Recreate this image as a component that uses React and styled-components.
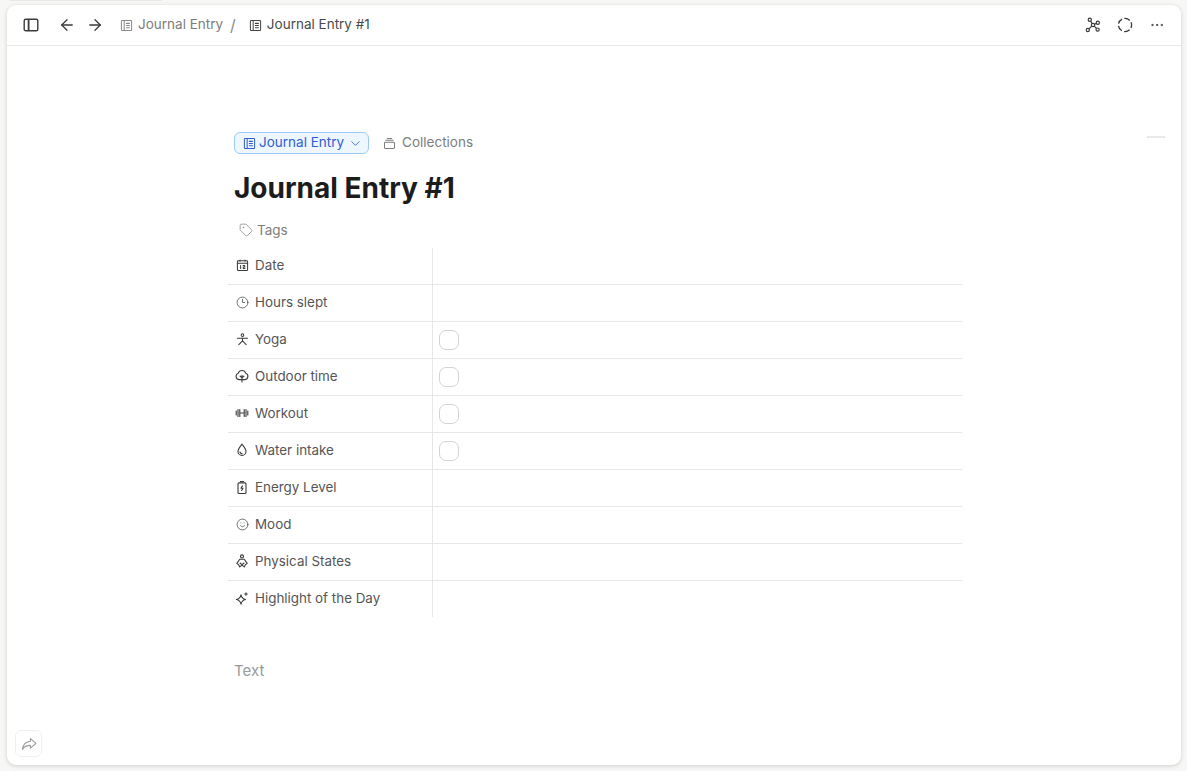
import React from 'react';
import styled, { createGlobalStyle } from 'styled-components';
import { ArrowLeft, ArrowRight, Ellipsis, Tag, Clock3, Smile, ChevronDown } from 'lucide-react';

const GlobalStyle = createGlobalStyle`
  html, body {
    margin: 0;
    padding: 0;
    height: 100%;
    background: #f7f7f5;
    font-family: Inter, "Noto Sans", sans-serif;
    overflow: hidden;
  }
`;

// small hand drawn icons
const Svg = ({ size = 14, children, width = 1.1 }) => (
  <svg width={size} height={size} viewBox="0 0 14 14" fill="none" stroke="currentColor" strokeWidth={width} strokeLinecap="round" strokeLinejoin="round">
    {children}
  </svg>
);

const DocIcon = () => (
  <Svg size={13}>
    <rect x="1.5" y="1.5" width="11" height="11" rx="1" />
    <path d="M4.5 1.5v11M6.8 4.7h3.4M6.8 7h3.4M6.8 9.3h3.4" />
  </Svg>
);

const SidebarIcon = () => (
  <svg width="16" height="16" viewBox="0 0 16 16" fill="none" stroke="currentColor" strokeWidth="1.4">
    <rect x="1.2" y="2.2" width="13.6" height="11.6" rx="1.6" />
    <path d="M5.6 2.2v11.6" strokeWidth="1.8" />
  </svg>
);

const GraphIcon = () => (
  <svg width="16" height="16" viewBox="0 0 16 16" fill="none" stroke="currentColor" strokeWidth="1.2">
    <circle cx="4.8" cy="2.8" r="1.6" />
    <circle cx="12.8" cy="5.8" r="1.6" />
    <circle cx="2.8" cy="13" r="1.6" />
    <circle cx="12.6" cy="12.6" r="1.6" />
    <circle cx="8" cy="8" r="1.7" />
    <path d="M5.7 4.2l1.3 2.2M11.2 6.4l-1.6 .9M4 11.9L6.7 9.2M11.4 11.4L9.3 9.2" />
  </svg>
);

const DashedCircle = () => (
  <svg width="16" height="16" viewBox="0 0 16 16" fill="none" stroke="currentColor" strokeWidth="1.3">
    <circle cx="8" cy="8" r="6.6" strokeDasharray="6 2.3" strokeDashoffset="3" />
  </svg>
);

const CollectionIcon = () => (
  <Svg size={13}>
    <rect x="1.6" y="5.6" width="10.8" height="6.8" rx="1" />
    <path d="M3 3.6h8M4.6 1.7h4.8" />
  </Svg>
);

const CalendarIcon = () => (
  <Svg size={13}>
    <rect x="1.5" y="2" width="11" height="10.5" rx="1" />
    <path d="M1.5 4.6h11M4.3 1v1.4M9.7 1v1.4M5 7v3.2M7.6 7h1.8v1.5H7.8v1.7h1.8" />
  </Svg>
);

const YogaIcon = () => (
  <Svg size={13}>
    <circle cx="7" cy="2.3" r="1.4" />
    <path d="M1.6 5.6h10.8M7 5.6v3L3 12.6M7 8.6l4 4" />
  </Svg>
);

const TreeIcon = () => (
  <Svg size={14}>
    <path d="M4 10.6a3.3 3.3 0 0 1-.7-6.4 3.9 3.9 0 0 1 7.4 0A3.3 3.3 0 0 1 10 10.6H4z" />
    <path d="M7 13V6.4M7 8.8l2-1.8M7 8.8L5 7" />
  </Svg>
);

const DumbbellIcon = () => (
  <Svg size={14}>
    <path d="M1.2 5v4M3 3.6v6.8M4.8 3.6v6.8M4.8 7h4.4M9.2 3.6v6.8M11 3.6v6.8M12.8 5v4" />
  </Svg>
);

const DropIcon = () => (
  <Svg size={14}>
    <path d="M7 1.2C9.2 3.8 11 5.8 11 8.4a4 4 0 0 1-8 0C3 5.8 4.8 3.8 7 1.2z" />
    <path d="M5 9a2.1 2.1 0 0 0 2 1.6" />
  </Svg>
);

const BatteryIcon = () => (
  <Svg size={15}>
    <rect x="3" y="2.4" width="8" height="10.6" rx="1" />
    <path d="M5.4 1h3.2M7.4 5.4L6 7.8h2L6.6 10" />
  </Svg>
);

const BodyIcon = () => (
  <Svg size={14}>
    <circle cx="7" cy="2.4" r="1.5" />
    <path d="M4.8 5.2h4.4l3 4.2-2 1.5-.9 2-2.3-1.8-2.3 1.8-.9-2-2-1.5 3-4.2zM5 9l2 1.7L9 9" />
  </Svg>
);

const SparkleIcon = () => (
  <Svg size={15}>
    <path d="M6 3.4C6.5 6 8 7.5 10.6 8 8 8.5 6.5 10 6 12.6 5.5 10 4 8.5 1.4 8 4 7.5 5.5 6 6 3.4z" />
    <path d="M11 1.2v2.6M9.7 2.5h2.6" />
  </Svg>
);

const ShareIcon = () => (
  <svg width="16" height="16" viewBox="0 0 16 16" fill="none" stroke="currentColor" strokeWidth="1.1" strokeLinejoin="round">
    <path d="M9.4 2.6L15 7.4l-5.6 4.7V9.4C6 9.3 3.4 10.4 1.4 13.4 2 8.6 5 5.7 9.4 5.3V2.6z" />
  </svg>
);

const properties = [
  { name: 'Date', icon: <CalendarIcon /> },
  { name: 'Hours slept', icon: <Clock3 size={13} strokeWidth={1.3} /> },
  { name: 'Yoga', icon: <YogaIcon />, check: true },
  { name: 'Outdoor time', icon: <TreeIcon />, check: true },
  { name: 'Workout', icon: <DumbbellIcon />, check: true },
  { name: 'Water intake', icon: <DropIcon />, check: true },
  { name: 'Energy Level', icon: <BatteryIcon /> },
  { name: 'Mood', icon: <Smile size={13} strokeWidth={1.3} /> },
  { name: 'Physical States', icon: <BodyIcon /> },
  { name: 'Highlight of the Day', icon: <SparkleIcon /> },
];

const App = () => {
  return (
    <>
      <GlobalStyle />
      <TopStrip />
      <Window>
        <TopBar>
          <BarButton $gap={19}><SidebarIcon /></BarButton>
          <BarButton $size={18} $gap={10}><ArrowLeft size={18} strokeWidth={1.7} /></BarButton>
          <BarButton $size={18} $gap={16}><ArrowRight size={18} strokeWidth={1.7} /></BarButton>
          <Crumb $muted><DocIcon />Journal Entry</Crumb>
          <Slash>/</Slash>
          <Crumb><DocIcon />Journal Entry #1</Crumb>
          <BarActions>
            <BarButton><GraphIcon /></BarButton>
            <BarButton><DashedCircle /></BarButton>
            <BarButton><Ellipsis size={16} strokeWidth={1.4} /></BarButton>
          </BarActions>
        </TopBar>
        <Body>
          <OutlineDash />
          <Page>
            <DocHeader>
              <TypePill>
                <DocIcon />
                Journal Entry
                <ChevronDown size={15} strokeWidth={1.3} />
              </TypePill>
              <Collections><CollectionIcon />Collections</Collections>
            </DocHeader>
            <Title>Journal Entry #1</Title>
            <TagsRow><Tag size={14} strokeWidth={1.2} />Tags</TagsRow>
            <Table>
              {properties.map((p) => (
                <Row key={p.name}>
                  <NameCell>
                    <IconSlot>{p.icon}</IconSlot>
                    <NameText>{p.name}</NameText>
                  </NameCell>
                  <ValueCell>{p.check && <Checkbox />}</ValueCell>
                </Row>
              ))}
            </Table>
            <Placeholder>Text</Placeholder>
          </Page>
          <ShareButton><ShareIcon /></ShareButton>
        </Body>
      </Window>
    </>
  );
};

const TopStrip = styled.div`
  position: absolute;
  top: 0;
  left: 9px;
  width: 153px;
  height: 1px;
  background: #e9e9e7;
`;

const Window = styled.div`
  box-sizing: border-box;
  margin: 5px 6px 6px 7px;
  height: 760px;
  background: #fff;
  border-radius: 9px;
  box-shadow: 0 1px 4px rgba(0, 0, 0, 0.16);
  display: flex;
  flex-direction: column;
  overflow: hidden;
`;

const TopBar = styled.header`
  box-sizing: border-box;
  flex: none;
  height: 41px;
  border-bottom: 1px solid #e7e7e7;
  display: flex;
  align-items: center;
  padding: 0 16px;
  color: #3a3a3a;
`;

const BarButton = styled.span`
  display: flex;
  align-items: center;
  justify-content: center;
  width: ${({ $size }) => $size || 16}px;
  height: ${({ $size }) => $size || 16}px;
  margin-right: ${({ $gap }) => $gap || 0}px;
`;

const BarActions = styled.div`
  margin-left: auto;
  display: flex;
  align-items: center;
  gap: 16px;
`;

const Crumb = styled.span`
  display: flex;
  align-items: center;
  gap: 5px;
  font-size: 13.5px;
  line-height: 16px;
  color: ${({ $muted }) => ($muted ? '#7d7d7d' : '#4a4a4a')};
  padding-bottom: 2px;
  svg {
    margin-top: 2px;
    color: ${({ $muted }) => ($muted ? '#8a8a8a' : '#444')};
  }
`;

const Slash = styled.span`
  font-size: 16px;
  color: #8a8a8a;
  margin: 0 13px 0 7px;
`;

const Body = styled.main`
  position: relative;
  flex: 1;
`;

const OutlineDash = styled.div`
  position: absolute;
  top: 90px;
  right: 16px;
  width: 18px;
  height: 2px;
  background: #e9e9e9;
`;

const Page = styled.div`
  width: 734px;
  margin-left: 221px;
  padding-top: 86px;
`;

const DocHeader = styled.div`
  display: flex;
  align-items: center;
  gap: 14px;
  padding-left: 6px;
  height: 22px;
`;

const TypePill = styled.span`
  box-sizing: border-box;
  height: 22px;
  display: flex;
  align-items: center;
  gap: 3px;
  padding: 0 5px 2px 8px;
  border: 1px solid #9ccbf7;
  border-radius: 6px;
  background: #eef6ff;
  color: #2f5fd0;
  font-size: 13.5px;
  line-height: 16px;
  svg {
    margin-top: 2px;
  }
  svg:last-child {
    margin-left: 1px;
  }
`;

const Collections = styled.span`
  display: flex;
  align-items: center;
  gap: 6px;
  font-size: 13.5px;
  line-height: 16px;
  padding-bottom: 2px;
  color: #7d7d7d;
  svg {
    margin-top: 2px;
  }
`;

const Title = styled.h1`
  margin: 16px 0 0;
  padding-left: 6px;
  height: 36px;
  line-height: 36px;
  font-size: 28px;
  font-weight: 700;
  color: #1c1c1c;
`;

const TagsRow = styled.div`
  display: flex;
  align-items: center;
  gap: 4px;
  height: 24px;
  margin-top: 12px;
  padding-left: 11px;
  font-size: 13.5px;
  color: #7d7d7d;
`;

const Table = styled.div`
  margin-top: 6px;
`;

const Row = styled.div`
  display: grid;
  grid-template-columns: 204px 1fr;
  height: 37px;
  box-sizing: border-box;
  border-bottom: 1px solid #e7e7e7;
  &:last-child {
    border-bottom-color: transparent;
  }
`;

const NameCell = styled.div`
  display: flex;
  align-items: center;
  padding-left: 7px;
  font-size: 13.4px;
  color: #555;
`;

const NameText = styled.span`
  line-height: 16px;
  padding-bottom: 2px;
`;

const IconSlot = styled.span`
  display: flex;
  align-items: center;
  justify-content: center;
  width: 14px;
  margin-right: 6px;
  padding-bottom: 2px;
  color: #3a3a3a;
`;

const ValueCell = styled.div`
  display: flex;
  align-items: center;
  border-left: 1px solid #e7e7e7;
  padding-left: 6px;
`;

const Checkbox = styled.span`
  box-sizing: border-box;
  width: 20px;
  height: 20px;
  border: 1px solid #d4d4d4;
  border-radius: 7px;
  background: #fff;
`;

const Placeholder = styled.p`
  margin: 43px 0 0;
  padding-left: 6px;
  font-size: 15px;
  line-height: 20px;
  color: #9a9a9a;
`;

const ShareButton = styled.span`
  position: absolute;
  left: 8px;
  bottom: 8px;
  box-sizing: border-box;
  width: 27px;
  height: 27px;
  display: flex;
  align-items: center;
  justify-content: center;
  border: 1px solid #efefef;
  border-radius: 6px;
  color: #9a9a9a;
`;

export default App;
